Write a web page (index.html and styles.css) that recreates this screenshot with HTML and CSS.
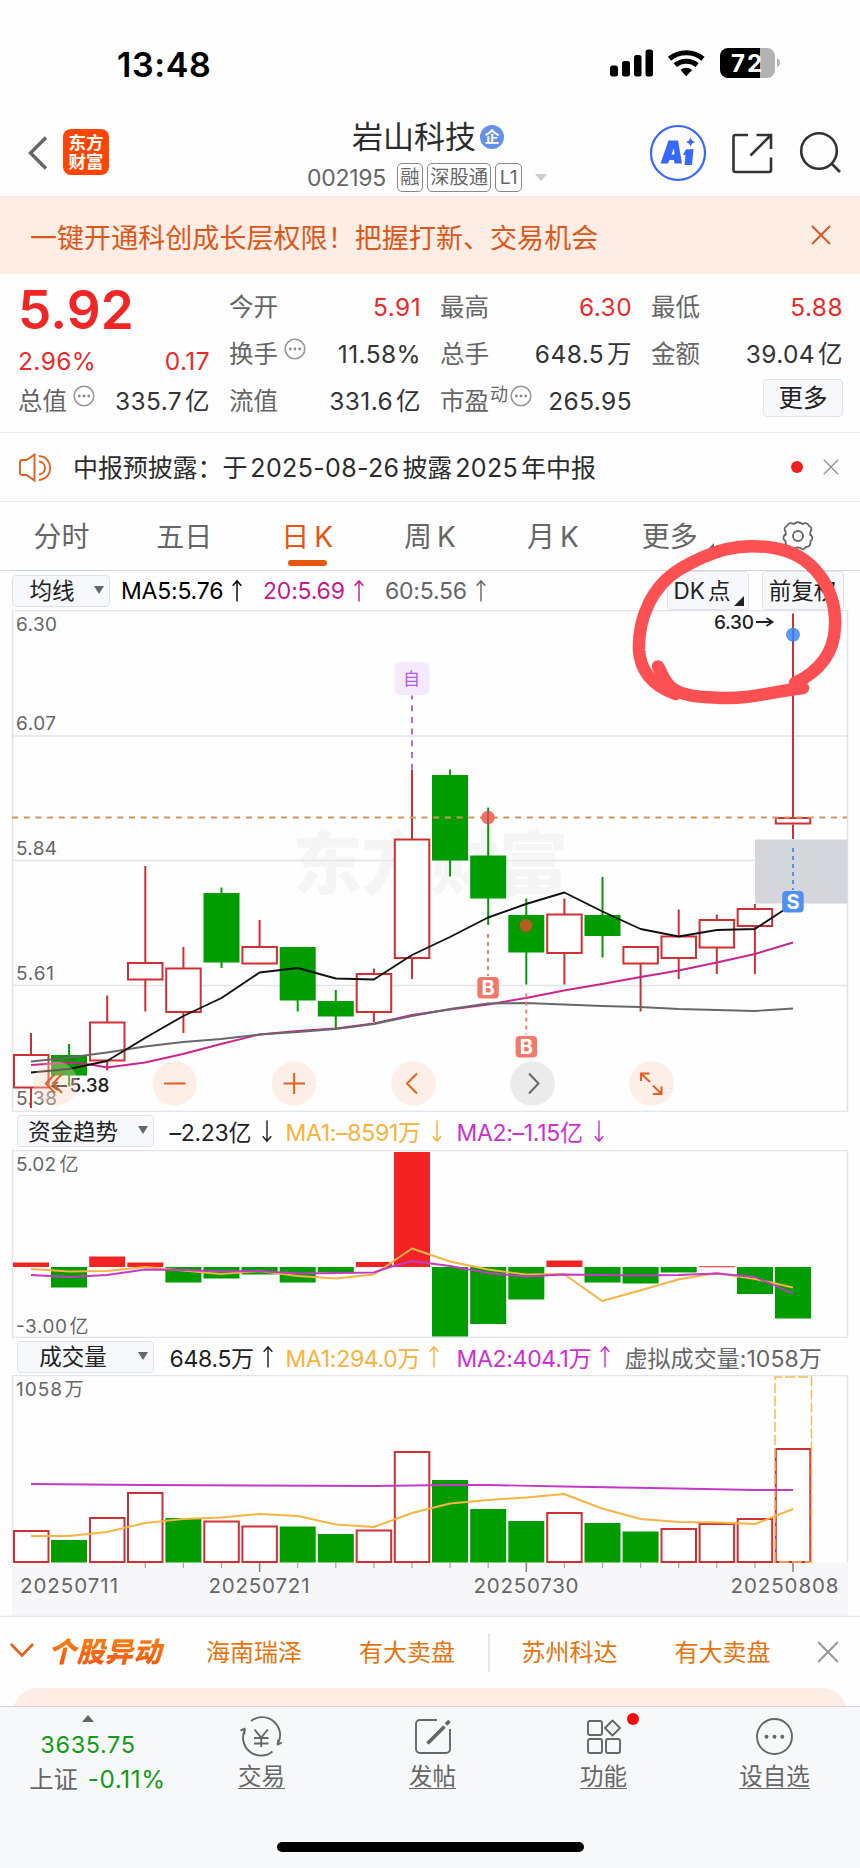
FILE: index.html
```html
<!DOCTYPE html>
<html lang="zh-CN">
<head>
<meta charset="utf-8">
<title>岩山科技 002195</title>
<link rel="stylesheet" href="styles.css">
</head>
<body>
<svg class="defs" width="0" height="0" aria-hidden="true">
  <symbol id="up" viewBox="0 0 12 24"><path d="M6 23.500V2M1.500 7L6 2l4.500 5" fill="none" stroke="currentColor" stroke-width="1.500"/></symbol>
  <symbol id="down" viewBox="0 0 12 24"><path d="M6 .5V22M1.500 17L6 22l4.500-5" fill="none" stroke="currentColor" stroke-width="1.500"/></symbol>
  <symbol id="info" viewBox="0 0 22 22"><circle cx="11" cy="11" r="9.800" fill="none" stroke="#999" stroke-width="1.600"/><g fill="#888"><circle cx="6.300" cy="11" r="1.400"/><circle cx="11" cy="11" r="1.400"/><circle cx="15.700" cy="11" r="1.400"/></g></symbol>
  <symbol id="close" viewBox="0 0 20 20"><path d="M1 1l18 18M19 1L1 19" fill="none" stroke="currentColor" stroke-width="1.900"/></symbol>
</svg>
<main class="phone">
  <div class="status">
    <span class="clock">13:48</span>
    <svg class="status-icons" width="172" height="32" viewBox="608 47 172 32">
      <rect x="610" y="65.500" width="8" height="11" rx="2.500"/><rect x="622" y="61" width="8" height="15.500" rx="2.500"/><rect x="634" y="55" width="7.500" height="21.500" rx="2.500"/><rect x="645.500" y="49.500" width="7.500" height="27" rx="2.500"/>
      <g fill="none" stroke="#000" stroke-width="5"><path d="M669.500 58.700a26.500 26.500 0 0 1 33.500 0"/><path d="M675.300 65.200a17 17 0 0 1 21.900 0"/></g>
      <path d="M686.300 76.300l-5.800-6.300a8.600 8.600 0 0 1 11.600 0z"/>
      <path d="M728 48h32v30h-32a8 8 0 0 1-8-8V56a8 8 0 0 1 8-8z"/><path fill="#b3b3b3" d="M760 48h7a8 8 0 0 1 8 8v14a8 8 0 0 1-8 8h-7zM777 58.500c4 1 4 7.500 0 8.500z"/>
      <text x="731" y="72" class="batt" textLength="31">72</text>
    </svg>
  </div>

  <header class="head">
    <svg class="back" width="20" height="36" viewBox="0 0 20 36"><path d="M18 2.500L2.500 18 18 33.500" fill="none" stroke="#666" stroke-width="3.500"/></svg>
    <div class="logo"><span>东方</span><span>财富</span></div>
    <div class="stock">
      <div class="name">岩山科技<span class="corp">企</span></div>
      <div class="code"><b>002195</b><i>融</i><i>深股通</i><i class="l1">L1</i><span class="caret"></span></div>
    </div>
    <svg class="head-icons" width="196" height="60" viewBox="648 123 196 60" fill="none">
      <circle cx="678" cy="153" r="27" stroke="#3868f8" stroke-width="2.200"/>
      <path d="M668.500 140.500h9.500l4 23h-7.500l-.5-3.500h-4.500l-1.500 3.500h-7.500zM674 148l-2.500 6.500h3z" fill="#3868f8" fill-rule="evenodd"/><path d="M686 149.500l7.500-.5-1.500 16h-7.500l1-10h-2.500z" fill="#3868f8"/><path d="M690.500 137.500l1.500 3 3 1.500-3 1.500-1.500 3-1.500-3-3-1.500 3-1.500z" fill="#3868f8"/>
      <g stroke="#333" stroke-width="2.600"><path d="M748 135h-12.500a2 2 0 0 0-2 2v33a2 2 0 0 0 2 2h33.500a2 2 0 0 0 2-2v-12.500M756.500 135H771v14M770.500 135.500L750.500 155.500"/><circle cx="819" cy="151" r="17.800"/><path d="M831.500 163.500l8.500 8.500"/></g>
    </svg>
  </header>

  <div class="banner"><span>一键开通科创成长层权限！把握打新、交易机会</span><svg width="20" height="20"><use href="#close"/></svg></div>

  <section class="quote">
    <div class="col">
      <div class="price">5.92</div>
      <div class="chg"><em>2.96%</em><em>0.17</em></div>
      <div class="row"><span>总值<svg><use href="#info"/></svg></span><b>335.7<s></s>亿</b></div>
    </div>
    <div class="col">
      <div class="row"><span>今开</span><em>5.91</em></div>
      <div class="row"><span>换手<svg><use href="#info"/></svg></span><b>11.58%</b></div>
      <div class="row"><span>流值</span><b>331.6<s></s>亿</b></div>
    </div>
    <div class="col">
      <div class="row"><span>最高</span><em>6.30</em></div>
      <div class="row"><span>总手</span><b>648.5<s></s>万</b></div>
      <div class="row"><span class="pe">市盈<sup>动</sup><svg><use href="#info"/></svg></span><b>265.95</b></div>
    </div>
    <div class="col">
      <div class="row"><span>最低</span><em>5.88</em></div>
      <div class="row"><span>金额</span><b>39.04<s></s>亿</b></div>
      <div class="row end"><button class="more">更多</button></div>
    </div>
  </section>

  <div class="notice">
    <svg width="34" height="30" viewBox="18 451 34 30" fill="none" stroke="#e0601c" stroke-width="1.900"><path d="M34.500 453.500v26l-8-5.500h-4q-2.500 0-2.500-2.500v-10q0-2.500 2.500-2.500h4z"/><path d="M39 455c15 1 15 23 0 24M39 460.500c8 1 8 12 0 13"/></svg>
    <p>中报预披露：于<s></s><b>2025-08-26</b><s></s>披露<s></s><b>2025</b><s></s>年中报</p>
    <span class="dot"></span>
    <svg class="x" width="16" height="16"><use href="#close"/></svg>
  </div>

  <nav class="tabs">
    <span>分时</span><span>五日</span><span class="on">日<s></s>K</span><span>周<s></s>K</span><span>月<s></s>K</span><span class="tri">更多</span>
    <span><svg width="34" height="34" viewBox="-17 -17 34 34" fill="none" stroke="#666" stroke-width="1.800"><circle r="5"/><path d="M-4.500-12Q0-15.500 4.500-12Q9-14.500 11-10Q15-8 12.500-4.500Q11.500 0 13-1Q16 3 12.500 5Q13 11 8 11Q5 15 2.500 12Q0 11-2.500 12Q-5 15-8 11Q-13 11-12.500 5Q-16 3-13.500-1Q-11.500 0-12.500-4.500Q-15-8-11-10Q-9-14.500-4.500-12Z"/></svg></span>
  </nav>

  <div class="legend ma">
    <button class="pick">均线</button>
    <span class="k1">MA5:5.76<svg><use href="#up"/></svg></span><span class="k2">20:5.69<svg><use href="#up"/></svg></span><span class="k3">60:5.56<svg><use href="#up"/></svg></span>
    <button class="opt dk">DK<s></s>点</button><button class="opt">前复权</button>
  </div>

  <svg class="panel" width="860" height="502" viewBox="0 610 860 502">
    <text class="wm" x="293" y="889" textLength="275">东方财富</text>
    <path class="grid" d="M12.500 610.500h835v501h-835zM12.500 736h835M12.500 860.500h835M12.500 985.500h835"/>
    <path fill="#d4d6dc" d="M755 839.500h92.500v64H755z"/>
    <g class="ylab"><text x="16" y="631" textLength="41">6.30</text><text x="16" y="729.500" textLength="40">6.07</text><text x="16" y="854.500" textLength="41">5.84</text><text x="16" y="980" textLength="38">5.61</text><text x="16" y="1105" textLength="41">5.38</text></g>
    <path class="red" d="M31 1033v21.500m0 33V1108M107.200 995.500V1022m0 38.500v10M145.300 866v96.500m0 17v32M183.400 947v21m0 44v21M259.600 920v26.500M373.900 968.500v5m0 38.500v10M412 770v69m0 119v21M564.400 898.500V914m0 39v31.500M640.600 963.500v48M678.700 909.500V936m0 22v21M716.800 914.500v5m0 28V974M754.900 904v4.500m0 17.500v48M793 613.500v204m0 7V839"/>
    <g class="box"><path d="M14 1055h34.500v32.500H14zM128 963h34.500v16.500H128zM166.200 968.500h34.500V1012h-34.500zM90 1022.500h34.500v38H90zM242.400 947h34.500v16.500h-34.500zM356.700 974h34.500v38h-34.500zM394.800 839.500h34.500V958h-34.500zM547.200 914.500h34.500V953h-34.500zM623.400 947h34.500v16.500h-34.500zM661.500 936.500H696V958h-34.500zM699.600 920h34.500v27.500h-34.500zM737.700 909h34.500v17h-34.500zM775.800 818h34.500v5.500h-34.500z"/></g>
    <path class="green" d="M69.100 1044v42.500M221.500 887.500V968M297.700 947v64.500M335.800 990v38M450.100 769.500v107M488.200 807.500V925M526.300 898.500v86M602.500 877v80.500"/>
    <path class="fill" d="M51 1055h36v20.500H51zM203.500 893h36v69.500h-36zM279.700 947h36v53.500h-36zM317.800 1001h36v15.500h-36zM432 775h36v85.500h-36zM470.200 855.500h36v43h-36zM508.300 915h36v37.500h-36zM584.500 915h36v21h-36z"/>
    <path d="M12 817.500h835" stroke="#d0955a" stroke-width="2" stroke-dasharray="6 5.700"/>
    <circle cx="488" cy="817.500" r="6.800" fill="#f96550" opacity=".92"/><circle cx="526" cy="925.500" r="6.500" fill="#b95c22"/><circle cx="793" cy="634.800" r="7" fill="#5b9bf8"/><path d="M793 628v14M488 811v13" stroke="#5048a0" stroke-opacity=".45" stroke-width="2"/>
    <g fill="none" stroke-width="1.900" stroke-linejoin="round">
      <path stroke="#c9258c" d="M31 1065L69 1062.500 90 1064.500 107 1067.500 145 1062.500 183 1054 221 1044 259.600 1034.500 297.700 1031 335.800 1028.500 373.900 1023.500 412 1015 450 1009.500 488 1004.500 526 998 564 990.500 602 984 640.600 977 678.700 970.500 716.800 962.500 754.900 954 793 942.500"/>
      <path stroke="#686868" d="M31 1061.500L69 1057.500 107 1052.500 145 1046.500 183 1042 221 1039 259.600 1034.500 297.700 1032 335.800 1029 373.900 1024 412 1016 450 1009 488 1003.500 526 1003 564 1004.500 602 1006 640 1007 678.700 1009 716.800 1010 754.900 1011 793 1008.500"/>
      <path stroke="#111" d="M31 1072.500L69 1069 107 1061 145 1038 183.400 1016 221.500 998 259.600 972.500 297.700 968 335.800 978.500 373.900 979.500 412 955 450 937 488 917.500 526 904 564.400 892.500 602.500 911.500 640.600 929 678.700 936.500 716.800 930 754.900 929 793 904"/>
    </g>
    <path d="M412 695.500V770" stroke="#b26be0" stroke-width="2" stroke-dasharray="6 5.700" stroke-dashoffset="2"/><rect x="394.500" y="662" width="35" height="33" rx="6" fill="#f5eafd"/><text class="zi" x="411.500" y="685">自</text>
    <g stroke="#f4796b" stroke-width="1.900" stroke-dasharray="4 4"><path d="M488 934v42M526.300 993.500v41"/><path stroke="#4d90ee" d="M793 848v42"/></g>
    <g><rect x="477.300" y="977" width="21.500" height="21.500" rx="4" fill="#f4796b"/><rect x="515.600" y="1036" width="21.500" height="21.500" rx="4" fill="#f4796b"/><rect x="782.200" y="891" width="21.500" height="21.500" rx="4" fill="#5090ee"/></g>
    <g class="bs"><text x="488" y="995">B</text><text x="526.300" y="1054">B</text><text x="793" y="909">S</text></g>
    <g class="mark"><text x="714" y="628.500" textLength="40">6.30</text><text x="69.500" y="1092" textLength="40">5.38</text><path d="M756 622h16m-5.500-4l6 4-6 4M67 1086H53m5-4l-6 4 6 4" fill="none" stroke="#222" stroke-width="1.800"/></g>
    <g fill="#fbd5c2" fill-opacity=".37"><circle cx="55.500" cy="1083.500" r="22.300"/><circle cx="174.700" cy="1083.500" r="22.300"/><circle cx="294" cy="1083.500" r="22.300"/><circle cx="413.500" cy="1083.500" r="22.300"/><circle cx="651.700" cy="1083.500" r="22.300"/><circle cx="532.600" cy="1083.500" r="22.300" fill="#ebebeb" fill-opacity="1"/></g>
    <g fill="none" stroke="#e2601e" stroke-width="2"><path d="M55 1074l-9 9.500 9 9.500M62 1074l-9 9.500 9 9.500M164 1083.500h21.500M283.500 1083.500h21.500M294.200 1073v21M417 1073.500l-10 10 10 10M641 1081v-7.500h8.500M641.500 1074l8.500 8M661.500 1086.500v7.500h-8.500M661 1093.500l-8-8"/><path stroke="#666" d="M529 1073.500l9.500 10-9.500 10"/></g>
  </svg>

  <div class="legend fund">
    <button class="pick wide">资金趋势</button>
    <span>–2.23亿<svg><use href="#down"/></svg></span><span class="y">MA1:–8591万<svg><use href="#down"/></svg></span><span class="m">MA2:–1.15亿<svg><use href="#down"/></svg></span>
  </div>

  <svg class="panel" width="860" height="188" viewBox="0 1150 860 188">
    <path class="grid" d="M12.500 1150.500h835v187h-835z"/>
    <g class="ylab"><text x="16" y="1170.500" textLength="40">5.02</text><text x="59.500" y="1170.500">亿</text><text x="16" y="1333" textLength="51">-3.00</text><text x="69.500" y="1333">亿</text></g>
    <path fill="#f32323" d="M13 1262.500h36v4.500H13zM89.200 1256.500h36v10.500h-36zM127.300 1262.500h36v4.500h-36zM355.900 1262h36v5h-36zM394 1152h36v115h-36zM546.400 1260.500h36v6.500h-36zM698.800 1266.200h36v1h-36z"/>
    <path class="fill" d="M51 1267h36v20.500H51zM165.400 1267h36v15.500h-36zM203.500 1267h36v11.500h-36zM241.600 1267h36v7.500h-36zM279.700 1267h36v15.500h-36zM317.800 1267h36v5h-36zM432 1267h36v69.500h-36zM470.200 1267h36v57h-36zM508.300 1267h36v32.500h-36zM584.500 1267h36v15.500h-36zM622.600 1267h36v16.500h-36zM660.700 1267h36v5.500h-36zM737 1267h36v27h-36zM775 1267h36v51.500h-36z"/>
    <g fill="none" stroke-width="1.900" stroke-linejoin="round">
      <path stroke="#f6b443" d="M31 1269L69 1271.500 107 1271 145 1267 183 1270.500 221 1274 259.600 1271 297.700 1276 335.800 1278.500 373.900 1274.500 412 1248.500 450 1261.500 488 1269.500 526 1274.500 564 1274 602 1301 640 1290.500 678 1279.500 716.800 1273 754.900 1279 793 1287.500"/>
      <path stroke="#c43ac6" d="M31 1275L69 1277 107 1275 145 1269.500 183 1270 221 1271.500 259 1271 297 1273.500 335 1273 373.900 1272.500 390 1267 412 1261 450 1266 488 1273 526 1276.500 564 1274.500 602 1275 640 1275.500 678 1275 716.800 1273.500 754.900 1277 793 1293.500"/>
    </g>
  </svg>

  <div class="legend vol">
    <button class="pick wide">成交量</button>
    <span>648.5万<svg><use href="#up"/></svg></span><span class="y">MA1:294.0万<svg><use href="#up"/></svg></span><span class="m">MA2:404.1万<svg><use href="#up"/></svg></span><span class="v">虚拟成交量:1058万</span>
  </div>

  <svg class="panel" width="860" height="242" viewBox="0 1375 860 242">
    <path fill="#f7f7fa" d="M12 1562.500h836V1617H12z"/>
    <path class="grid" d="M12.500 1562.500v-187h835v187"/><path class="grid" d="M0 1616.500h860"/>
    <g class="ylab"><text x="16" y="1395.500" textLength="46">1058</text><text x="64.500" y="1395.500">万</text></g>
    <path class="fill" d="M51 1540h36v22.500H51zM165.400 1518h36v44.500h-36zM279.700 1526.500h36v36h-36zM317.800 1534h36v28.500h-36zM432 1480h36v82.500h-36zM470.200 1509h36v53.500h-36zM508.300 1521h36v41.500h-36zM584.500 1523h36v39.500h-36zM622.600 1531.500h36v31h-36z"/>
    <g class="box"><path d="M14 1531h34.500v31H14zM90 1518h34.500v44H90zM128 1493h34.500v69H128zM204.300 1521.500h34.500v40.500h-34.500zM242.400 1526.500h34.500v35.500h-34.500zM356.700 1530.500h34.500v31.500h-34.500zM394.800 1452h34.500v110h-34.500zM547.200 1513h34.500v49h-34.500zM661.500 1529H696v33h-34.500zM699.600 1524h34.500v38h-34.500zM737.700 1519h34.500v43h-34.500zM775.800 1449h34.500v113h-34.500z"/></g>
    <path d="M775 1562v-185h36.500v185z" fill="none" stroke="#fbb85a" stroke-width="1.500" stroke-dasharray="10 3"/>
    <g fill="none" stroke-width="1.900" stroke-linejoin="round">
      <path stroke="#f6b443" d="M31 1536H69L107 1532 145 1523 183 1519 221 1517.500 259.600 1514 297.700 1516 335.800 1524.500 373.900 1527 412 1513 450 1503.500 488 1500 526 1497.500 564 1494 602 1508.500 640.600 1519 678.700 1522 716.800 1522.500 754.900 1524 793 1509"/>
      <path stroke="#c43ac6" d="M31 1484L145 1485 373.900 1486 450 1485H488L564 1486.500 678 1488.500 755 1490H793"/>
    </g>
    <path stroke="#aaa" stroke-width="1.300" d="M145.300 1563v5M183.400 1563v5M221.500 1563v5M297.700 1563v5M335.800 1563v5M373.900 1563v5M412 1563v5M450.100 1563v5M488.200 1563v5M564.400 1563v5M602.500 1563v5M640.600 1563v5M678.700 1563v5M716.800 1563v5M754.900 1563v5"/>
    <path stroke="#888" stroke-width="1.600" d="M259.600 1563v9M526.300 1563v9M793 1563v9"/>
    <g class="date"><text x="20" y="1592.700" textLength="98">20250711</text><text x="208.500" y="1592.700" textLength="101">20250721</text><text x="473.500" y="1592.700" textLength="105">20250730</text><text x="730.500" y="1592.700" textLength="108">20250808</text></g>
  </svg>

  <section class="movers">
    <div class="mv">
      <svg class="chev" width="26" height="18" viewBox="0 0 26 18"><path d="M2 2l11 11.500L24 2" fill="none" stroke="#e0601c" stroke-width="2.600"/></svg>
      <strong>个股异动</strong>
      <span>海南瑞泽</span><span>有大卖盘</span><hr><span>苏州科达</span><span>有大卖盘</span>
      <svg class="mx" width="22" height="22"><use href="#close"/></svg>
    </div>
    <div class="card"></div>
  </section>

  <footer class="bar">
    <div class="index"><span class="tick"></span><b>3635.75</b><p>上证 <b>-0.11%</b></p></div>
    <a><svg viewBox="240 1716 44 42"><path d="M251 1721a18 18 0 0 1 26.500 23.500l1-5m-1.500 5.500l5-2.500M272.500 1751.500a18 18 0 0 1-27.500-22l-1 5m1.500-6l-5 2M254.500 1729.500l6.700 8 6.700-8M254 1738h14.500M254 1743.500h14.500M261.200 1737v10"/></svg><u>交易</u></a>
    <a><svg viewBox="411 1716 44 42"><path d="M437 1720h-17a4 4 0 0 0-4 4v25a4 4 0 0 0 4 4h26a4 4 0 0 0 4-4v-20"/><path stroke-width="3.600" d="M427.500 1743.500l17-17M446 1724.500l3.500-3.500"/></svg><u>发帖</u></a>
    <a class="new"><svg viewBox="582 1716 44 42"><rect x="588" y="1721" width="14" height="14" rx="2"/><rect x="588" y="1739" width="14" height="14" rx="2"/><rect x="606" y="1739" width="14" height="14" rx="2"/><path d="M612.500 1720.500l7.500 7.500-7.500 7.500-7.500-7.500z" stroke-linejoin="round"/></svg><u>功能</u></a>
    <a><svg viewBox="753 1716 44 42"><circle cx="774.500" cy="1736.500" r="17.500"/><g fill="#666" stroke="none"><circle cx="766.500" cy="1736.700" r="2"/><circle cx="774.500" cy="1736.700" r="2"/><circle cx="782.300" cy="1736.700" r="2"/></g></svg><u>设自选</u></a>
    <span class="home"></span>
  </footer>

  <svg class="scribble" width="220" height="180" viewBox="625 535 220 180"><path d="M658 666.500C663 675 664 682 672 688C684 697 702 697 722 698C748 699 765 693 803 688M795 683C820 671 834 653 835 627C837 590 814 553 771 547.500C738 543 713 550 680 569C652 586 638 618 639 650C640 668 650 685 676 694"/></svg>
</main>
</body>
</html>
```
FILE: styles.css
```css
* { box-sizing: border-box; }
body { margin: 0; background: #fff; font-family: Inter, "Noto Sans CJK SC", sans-serif; font-weight: 400; color: #333; }
.defs { position: absolute; }
.phone { width: 860px; height: 1868px; position: relative; overflow: hidden; display: flex; flex-direction: column; background: #fefefe; }
.phone > * { flex: none; }
em, i { font-style: normal; }
b { font-weight: 400; }
s { display: inline-block; width: 3px; text-decoration: none; }
button { font: inherit; color: #222; background: #f7f8fb; border: 1.5px solid #dfe2e8; border-radius: 4px; padding: 0; display: block; }

.status { height: 100px; padding: 47px 80px 0 117px; display: flex; justify-content: space-between; }
.clock { font-size: 34px; font-weight: 600; line-height: 35px; color: #000; letter-spacing: .6px; }
.batt { font: 700 24px Inter, sans-serif; fill: #fff; }

.head { height: 97px; display: flex; border-bottom: 1.5px solid #ecebee; padding-left: 28px; }
.back { margin-top: 35px; }
.logo { width: 46px; height: 46px; margin: 29px 0 0 15px; border-radius: 8px; background: #ff4500; color: #fff; font-size: 17.5px; line-height: 19.5px; font-weight: 700; display: flex; flex-direction: column; align-items: center; padding-top: 3.5px; }
.stock { width: 260px; margin: 19px 0 0 199px; }
.name { font-size: 31px; line-height: 36px; color: #2c2c2c; display: flex; align-items: center; padding-left: 44px; }
.corp { width: 24px; height: 24px; margin-left: 4px; border-radius: 50%; background: #6390e8; color: #fff; font-size: 15px; font-weight: 700; line-height: 23px; text-align: center; }
.code { display: flex; margin-top: 8px; align-items: center; color: #666; font-size: 23px; line-height: 28px; }
.code b { width: 90px; margin-left: -1px; letter-spacing: -.3px; }
.code i { height: 29px; line-height: 27px; border: 1.5px solid #888; border-radius: 5px; font-size: 19.300px; padding: 0 2.300px; margin-right: 4px; }
.code .l1 { padding: 0 3.500px; }
.caret { margin-left: 9px; border: 6.500px solid transparent; border-top: 7px solid #ccc; border-bottom: 0; }
.head-icons { margin-left: 80px; margin-top: 23px; }

.banner { height: 77px; background: #fdede5; color: #dc581a; font-size: 27px; letter-spacing: .06px; display: flex; align-items: center; justify-content: space-between; padding: 0 29px 0 30px; }
.banner span { padding-top: 2px; }
.banner svg { margin-top: -2px; }

.quote { height: 159px; border-bottom: 1.500px solid #ececef; padding: 9px 17px 0 18px; display: grid; grid-template-columns: repeat(4, 192px); column-gap: 19px; font-size: 24.500px; color: #333; }
.row, .chg { display: flex; justify-content: space-between; height: 47px; line-height: 48px; white-space: nowrap; }
.row span { color: #666; }
.row b, .row em, .chg em { letter-spacing: .4px; }
.row svg { width: 22px; height: 22px; margin-left: 6px; vertical-align: 3px; }
.quote em { color: #ec2a2a; }
.price { font-size: 53px; font-weight: 600; color: #f02525; height: 57px; line-height: 55px; letter-spacing: .2px; }
.chg { height: 37px; line-height: 42px; }
.pe sup { font-size: 18px; line-height: 0; vertical-align: 9px; margin-left: 1px; }
.row .pe svg { margin-left: 2px; }
.end { justify-content: flex-end; align-items: center; }
.more { width: 80px; height: 38px; line-height: 36px; margin-top: -5px; }

.notice { height: 69px; border-bottom: 1.500px solid #ececef; display: flex; align-items: center; padding: 0 21px 0 18px; }
.notice p { margin: -3px 0 0 21px; flex: 1; font-size: 25px; letter-spacing: -.1px; color: #2c2c2c; }
.notice p b { letter-spacing: .35px; }
.dot { width: 12px; height: 12px; border-radius: 50%; background: #f02020; margin-right: 20px; }
.x { color: #999; }

.tabs { height: 69px; border-bottom: 1.500px solid #d5d8e0; display: grid; grid-template-columns: repeat(7, 1fr); font-size: 28px; line-height: 71px; text-align: center; color: #666; }
.tabs span { position: relative; }
.tabs s { width: 5px; }
.tabs svg { display: block; margin: 17px auto 0; transform: translateX(-1px); }
.tabs .on { color: #e5560f; }
.on::after { content: ""; position: absolute; left: 42px; top: 58px; width: 39px; height: 5.500px; border-radius: 3px; background: #e5560f; }
.tri { padding-right: 12px; }
.tri::after { content: ""; position: absolute; left: 92px; top: 41px; border: 4px solid transparent; border-right-color: #666; border-bottom-color: #666; }

.legend { height: 38px; display: flex; align-items: center; font-size: 23px; color: #222; white-space: nowrap; padding-left: 16.500px; }
.legend span { display: flex; align-items: center; }
.legend span svg { width: 12px; height: 23px; margin-left: 8px; }
.legend.ma { height: 39px; padding-left: 12px; }
.pick { width: 98px; height: 32px; line-height: 29px; font-size: 22.500px; position: relative; padding-right: 18px; }
.pick::after { content: ""; position: absolute; right: 5px; top: 10px; border: 5px solid transparent; border-top: 8px solid #666; border-bottom: 0; }
.wide { width: 137px; margin-right: 16px; padding-right: 24px; }
.k1 { width: 142px; margin-left: 11px; letter-spacing: -.2px; color: #000; }
.k2 { width: 122px; color: #c9188c; letter-spacing: -.2px; }
.k3 { width: 282px; color: #666; letter-spacing: -.2px; }
.opt { width: 82px; height: 39px; line-height: 35px; font-size: 22.500px; margin-right: 12.500px; position: relative; }
.dk { padding-right: 12px; }
.dk::after { content: ""; position: absolute; right: 4px; bottom: 3px; border: 5.500px solid transparent; border-right-color: #222; border-bottom-color: #222; }
.legend.vol { height: 37px; }
.fund span, .vol span { width: 116px; letter-spacing: -.3px; }
.fund span svg { margin-left: 10px; }
.legend .y { color: #f9b23c; width: 171px; }
.legend .m { color: #cc30d0; width: 168px; }
.legend .v { color: #666; letter-spacing: .05px; }

.panel { display: block; }
.panel text { font-family: Inter, "Noto Sans CJK SC", sans-serif; }
.grid { fill: none; stroke: #e2e4ea; stroke-width: 1.500; }
.ylab { font-size: 19px; fill: #666; }
.date { font-size: 20.500px; fill: #666; }
.red { stroke: #cf3034; stroke-width: 2; fill: none; }
.box { stroke: #cf3034; stroke-width: 2; fill: #fff; }
.green { stroke: #009c00; stroke-width: 2; fill: none; }
.fill { fill: #009c00; }
.panel .wm { font-family: "Noto Sans CJK SC", sans-serif; font-size: 69px; font-weight: 900; fill: #f5f5f6; }
.zi { font-size: 17px; fill: #ae5cf0; text-anchor: middle; }
.bs { font-size: 20px; font-weight: 700; fill: #fff; text-anchor: middle; }
.mark { font-size: 19px; font-weight: 500; fill: #222; }

.movers { height: 89px; overflow: hidden; }
.mv { height: 71px; display: flex; align-items: center; color: #e8730c; font-size: 24px; padding-left: 9px; }
.chev { margin-top: -3px; }
.mv strong { width: 118px; margin: -6px 40px 0 13px; font-size: 28px; font-weight: 900; font-style: italic; letter-spacing: .4px; background: linear-gradient(#fb8a1a, #f2510f); -webkit-background-clip: text; background-clip: text; color: transparent; white-space: nowrap; }
.mv span { width: 96px; margin: -5px 57px 0 0; white-space: nowrap; }
.mv hr { width: 1.500px; height: 39px; border: 0; background: #e6e6e8; margin: 0 32px 0 -24px; }
.mv .mx { margin: -2px 0 0 -11px; color: #999; }
.card { margin: 0 13px; height: 50px; border-radius: 32px; background: #fdede5; }

.bar { height: 162px; border-top: 1.500px solid #d0d3da; background: #f7f8fa; display: grid; grid-template-columns: 176px repeat(4, 171px); position: relative; font-size: 23.500px; color: #666; }
.bar a { display: flex; flex-direction: column; align-items: center; position: relative; }
.bar a svg { width: 44px; height: 42px; margin-top: 9px; fill: none; stroke: #666; stroke-width: 1.900; }
.bar u { line-height: 34px; margin-top: 2px; text-decoration: none; position: relative; }
.bar u::after { content: ""; position: absolute; left: 0; right: 0; bottom: 5px; border-bottom: 1.500px solid #666; }
.index { display: flex; flex-direction: column; align-items: center; }
.index b { color: #159a15; line-height: 34px; letter-spacing: .6px; }
.index > b { margin-top: 6px; }
.index p { margin: 0; line-height: 34px; padding-left: 19px; white-space: nowrap; font-size: 24.300px; }
.index p b { margin-left: 3px; }
.tick { margin-top: 8px; border: 6.500px solid transparent; border-bottom: 7px solid #666; border-top: 0; }
.new::after { content: ""; position: absolute; left: 109px; top: 6px; width: 12px; height: 12px; border-radius: 50%; background: #fa0a0a; }
.home { position: absolute; left: 277px; top: 135px; width: 307px; height: 10px; border-radius: 5px; background: #000; }
.scribble { position: absolute; left: 625px; top: 535px; fill: none; stroke: #fd5052; stroke-width: 12.500; stroke-linecap: round; stroke-linejoin: round; }
```
